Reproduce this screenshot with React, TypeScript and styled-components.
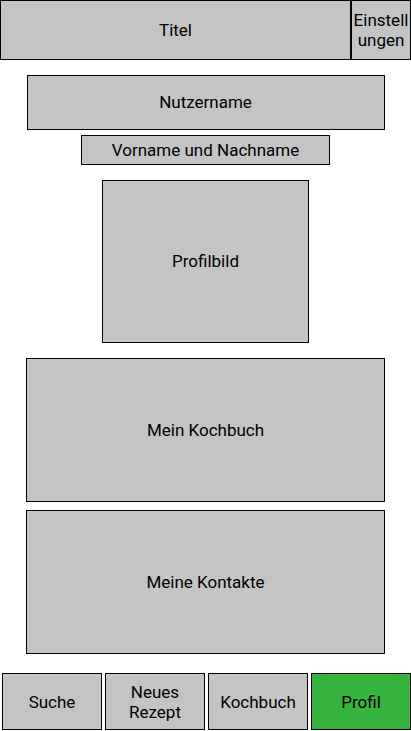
import styled, { createGlobalStyle } from "styled-components";

const GlobalStyle = createGlobalStyle`
  html, body {
    margin: 0;
    padding: 0;
    background: #ffffff;
  }
  body {
    font-family: Roboto, "Liberation Sans", sans-serif;
    color: #000000;
  }
`;

const tabs = [
  { label: "Suche" },
  { label: "Neues Rezept" },
  { label: "Kochbuch" },
  { label: "Profil", active: true },
];

function App() {
  return (
    <>
      <GlobalStyle />
      <Page>
        <Header>
          <TitleBox>Titel</TitleBox>
          <SettingsBox>Einstellungen</SettingsBox>
        </Header>
        <Content>
          <Panel $width={358} $height={55} $top={15}>
            Nutzername
          </Panel>
          <Panel $width={249} $height={30} $top={5}>
            Vorname und Nachname
          </Panel>
          <Panel $width={207} $height={163} $top={15}>
            Profilbild
          </Panel>
          <Panel $width={359} $height={144} $top={15}>
            Mein Kochbuch
          </Panel>
          <Panel $width={359} $height={144} $top={8}>
            Meine Kontakte
          </Panel>
        </Content>
        <NavBar>
          {tabs.map((t) => (
            <NavButton key={t.label} $active={t.active}>
              {t.label}
            </NavButton>
          ))}
        </NavBar>
      </Page>
    </>
  );
}

const Page = styled.div`
  width: 411px;
  height: 731px;
  display: flex;
  flex-direction: column;
`;

const Header = styled.div`
  display: flex;
  height: 60px;
`;

const Box = styled.div`
  box-sizing: border-box;
  background: #c4c4c4;
  border: 1px solid #000;
  display: flex;
  align-items: center;
  justify-content: center;
  text-align: center;
  font-size: 17px;
  line-height: 20px;
  padding-bottom: 1px;
`;

const TitleBox = styled(Box)`
  width: 351px;
`;

const SettingsBox = styled(Box)`
  width: 60px;
  word-break: break-all;
  padding: 0;
`;

const Content = styled.div`
  display: flex;
  flex-direction: column;
  align-items: center;
`;

const Panel = styled(Box)<{ $width: number; $height: number; $top: number }>`
  width: ${(p) => p.$width}px;
  height: ${(p) => p.$height}px;
  margin-top: ${(p) => p.$top}px;
`;

const NavBar = styled.div`
  display: flex;
  gap: 3px;
  margin-top: 19px;
  padding-left: 2px;
`;

const NavButton = styled(Box)<{ $active?: boolean }>`
  width: 100px;
  height: 57px;
  background: ${(p) => (p.$active ? "#37b43d" : "#c4c4c4")};
  padding: 0 18px;
`;

export default App;
